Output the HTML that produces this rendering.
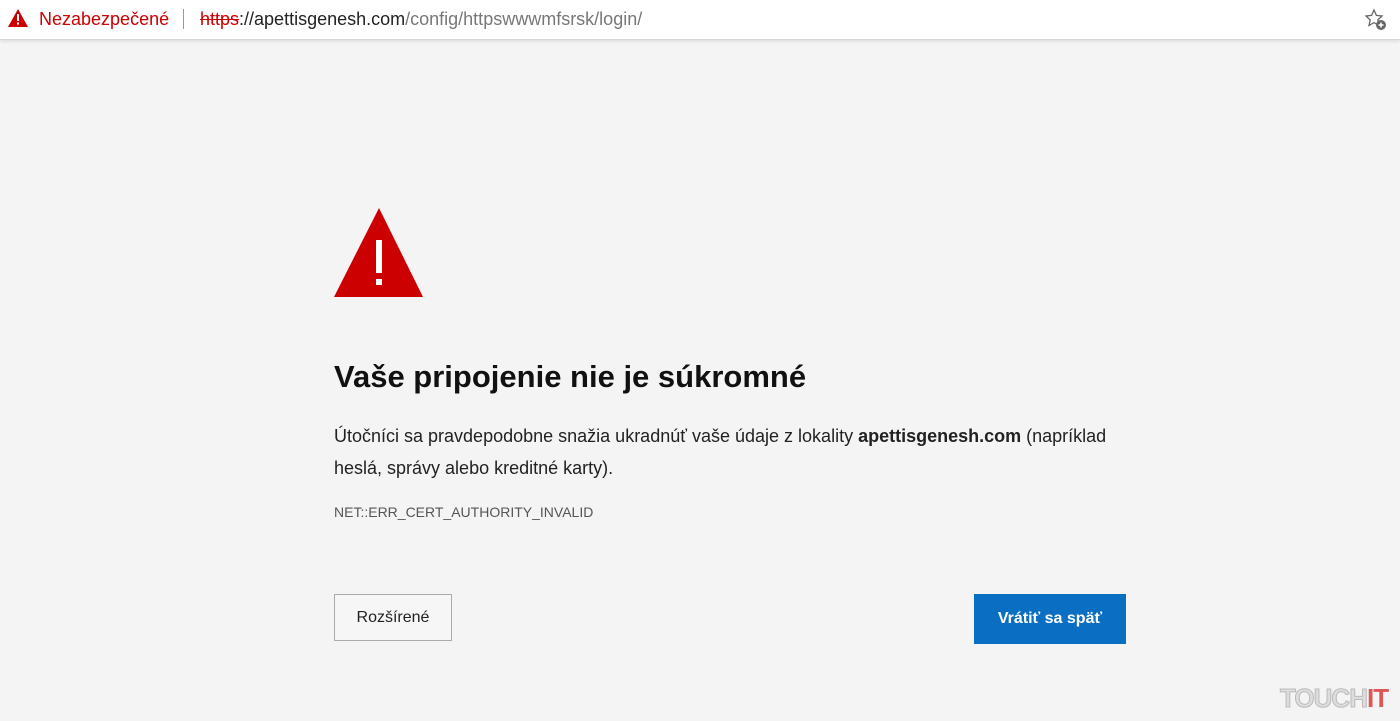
<!DOCTYPE html>
<html><head><meta charset="utf-8"><style>
body{margin:0;width:1400px;height:721px;background:#f4f4f4;font-family:"Liberation Sans",sans-serif;position:relative;overflow:hidden}
.bar{position:absolute;left:0;top:0;width:1400px;height:39px;background:#fff;border-bottom:1px solid #d6d6d6;box-shadow:0 2px 3px rgba(0,0,0,.08)}
.bar .t{position:absolute;top:9px;font-size:18px;white-space:nowrap}
.p{position:absolute}
</style></head><body>
<div class="bar">
<svg class="p" style="left:7px;top:8px" width="22" height="20" viewBox="0 0 22 20"><path d="M11 1L21 19H1Z" fill="#c00"/><rect x="10" y="6" width="2" height="7" fill="#fff"/><rect x="10" y="14.5" width="2" height="2" fill="#fff"/></svg>
<span class="t" style="left:39px;color:#c00">Nezabezpečené</span>
<div class="p" style="left:183px;top:9px;width:1px;height:20px;background:#999"></div>
<span class="t" style="left:200px;color:#777"><span style="color:#c00;text-decoration:line-through">https</span><span style="color:#222">://apettisgenesh.com</span>/config/httpswwwmfsrsk/login/</span>
<svg class="p" style="left:1364px;top:8px" width="24" height="24" viewBox="0 0 24 24"><path d="M10 2l2.4 5.4 5.6.6-4.2 3.9 1.2 5.6L10 14.6 5 17.5l1.2-5.6L2 8l5.6-.6z" fill="none" stroke="#666" stroke-width="1.3"/><circle cx="17" cy="17" r="5" fill="#666"/><path d="M17 14.5v5M14.5 17h5" stroke="#fff" stroke-width="1.5"/></svg>
</div>
<svg class="p" style="left:334px;top:208px" width="90" height="90" viewBox="0 0 90 90"><path d="M45 0L89 89H0Z" fill="#c00"/><rect x="42" y="32" width="6" height="33" fill="#fff"/><rect x="42" y="71" width="6" height="6" fill="#fff"/></svg>
<div class="p" style="left:334px;top:359px;font-size:31px;font-weight:bold;color:#111">Vaše pripojenie nie je súkromné</div>
<div class="p" style="left:334px;top:420px;width:800px;font-size:18px;line-height:32px;color:#222">Útočníci sa pravdepodobne snažia ukradnúť vaše údaje z lokality <b>apettisgenesh.com</b> (napríklad heslá, správy alebo kreditné karty).</div>
<div class="p" style="left:334px;top:504px;font-size:14px;color:#555">NET::ERR_CERT_AUTHORITY_INVALID</div>
<div class="p" style="left:334px;top:594px;width:116px;height:45px;border:1px solid #aaa;background:#f6f6f6;font-size:16px;line-height:45px;text-align:center;color:#222">Rozšírené</div>
<div class="p" style="left:974px;top:594px;width:152px;height:50px;background:#0a6fc2;font-size:16px;font-weight:bold;line-height:50px;text-align:center;color:#fff">Vrátiť sa späť</div>
<div class="p" style="left:1280px;top:683px;font-size:26px;font-weight:bold;color:#ddd;letter-spacing:-1px;-webkit-text-stroke:1px #bbb">TOUCH<span style="color:#e05555;-webkit-text-stroke:0">IT</span></div>
</body></html>
